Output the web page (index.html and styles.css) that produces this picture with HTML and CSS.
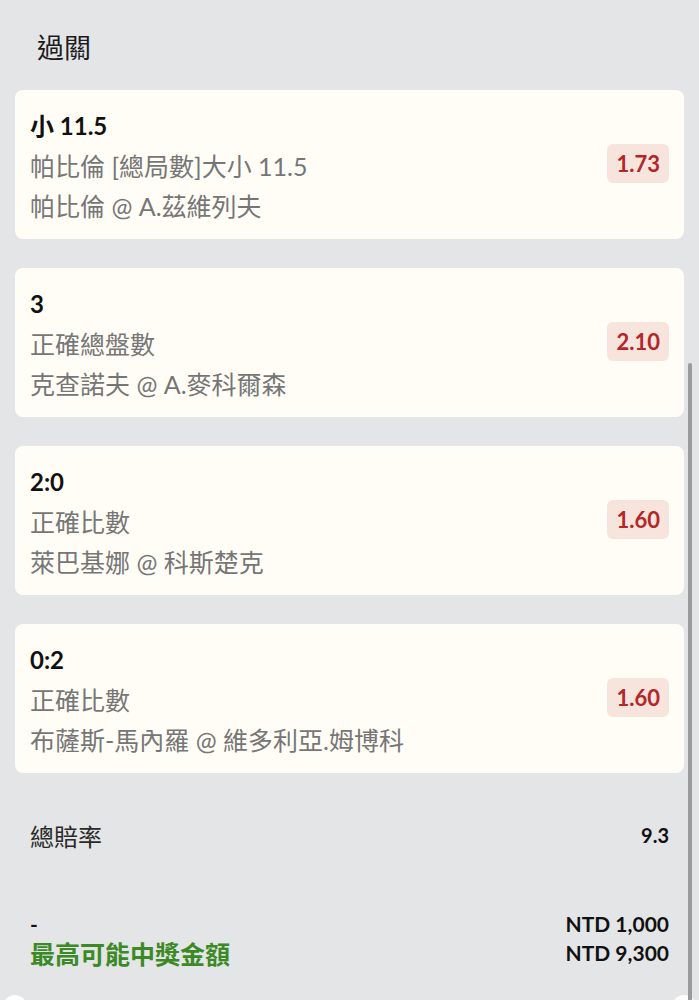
FILE: index.html
```html
<!DOCTYPE html>
<html lang="zh-Hant">
<head>
<meta charset="utf-8">
<title>過關</title>
<link rel="stylesheet" href="styles.css">
</head>
<body>
<div class="page">
  <h1 class="title">過關</h1>
  <div class="cards">
    <div class="card">
      <div class="info">
        <div class="pick">小 11.5</div>
        <div class="line">帕比倫 [總局數]大小 11.5</div>
        <div class="line">帕比倫 @ A.茲維列夫</div>
      </div>
      <div class="odds">1.73</div>
    </div>
    <div class="card">
      <div class="info">
        <div class="pick">3</div>
        <div class="line">正確總盤數</div>
        <div class="line">克查諾夫 @ A.麥科爾森</div>
      </div>
      <div class="odds">2.10</div>
    </div>
    <div class="card">
      <div class="info">
        <div class="pick">2:0</div>
        <div class="line">正確比數</div>
        <div class="line">萊巴基娜 @ 科斯楚克</div>
      </div>
      <div class="odds">1.60</div>
    </div>
    <div class="card">
      <div class="info">
        <div class="pick">0:2</div>
        <div class="line">正確比數</div>
        <div class="line">布薩斯-馬內羅 @ 維多利亞.姆博科</div>
      </div>
      <div class="odds">1.60</div>
    </div>
  </div>
  <div class="summary">
    <div class="row total">
      <span class="label">總賠率</span>
      <span class="value">9.3</span>
    </div>
    <div class="payout">
      <div class="row">
        <span class="dash">-</span>
        <span class="amount">NTD 1,000</span>
      </div>
      <div class="row">
        <span class="win">最高可能中獎金額</span>
        <span class="amount">NTD 9,300</span>
      </div>
    </div>
  </div>
  <div class="footer">
    <span class="dot"></span>
    <span class="dot"></span>
  </div>
  <div class="scrollbar"></div>
</div>
</body>
</html>
```

FILE: styles.css
```css
html, body {
  margin: 0;
  padding: 0;
  background: #e4e5e7;
}

body {
  font-family: Lato, "Noto Sans CJK TC", sans-serif;
  color: #111;
}

.page {
  position: relative;
  padding: 0 15px;
  overflow: hidden;
}

.title {
  margin: 0;
  padding: 30px 0 0 22px;
  height: 90px;
  box-sizing: border-box;
  font-size: 27px;
  font-weight: 400;
  line-height: 36px;
  color: #1c1c1c;
}

.cards {
  display: flex;
  flex-direction: column;
  gap: 29px;
}

.card {
  display: flex;
  align-items: center;
  justify-content: space-between;
  height: 149px;
  box-sizing: border-box;
  padding: 16px 15px 13px 15px;
  background: #fffdf6;
  border-radius: 8px;
}

.info {
  display: flex;
  flex-direction: column;
}

.pick {
  font-size: 24px;
  font-weight: 700;
  line-height: 40px;
  color: #111;
}

.line {
  font-size: 25px;
  line-height: 40px;
  color: #767676;
}

.odds {
  margin-top: -5px;
  padding: 0 9px;
  height: 39px;
  line-height: 39px;
  border-radius: 6px;
  background: #f7e4dd;
  color: #b3262a;
  font-size: 22px;
  font-weight: 700;
}

.summary {
  padding: 47px 15px 0 15px;
}

.row {
  display: flex;
  justify-content: space-between;
  align-items: center;
}

.total {
  height: 30px;
}

.label {
  font-size: 24px;
  color: #2a2a2a;
}

.value {
  font-size: 20px;
  font-weight: 700;
  color: #111;
}

.payout {
  margin-top: 59px;
  display: flex;
  flex-direction: column;
}

.payout .row {
  height: 29px;
}

.dash {
  font-size: 21px;
  font-weight: 700;
}

.amount {
  font-size: 21px;
  font-weight: 700;
  color: #111;
}

.win {
  font-size: 25px;
  font-weight: 700;
  color: #3b8a26;
}

.footer {
  display: flex;
  justify-content: space-between;
  margin: 28px -12px 0 -12px;
}

.dot {
  width: 24px;
  height: 24px;
  border-radius: 50%;
  background: #ffffff;
}

.scrollbar {
  position: absolute;
  top: 363px;
  right: 7px;
  width: 4px;
  height: 700px;
  border-radius: 2px;
  background: #9b9b9b;
}
```
